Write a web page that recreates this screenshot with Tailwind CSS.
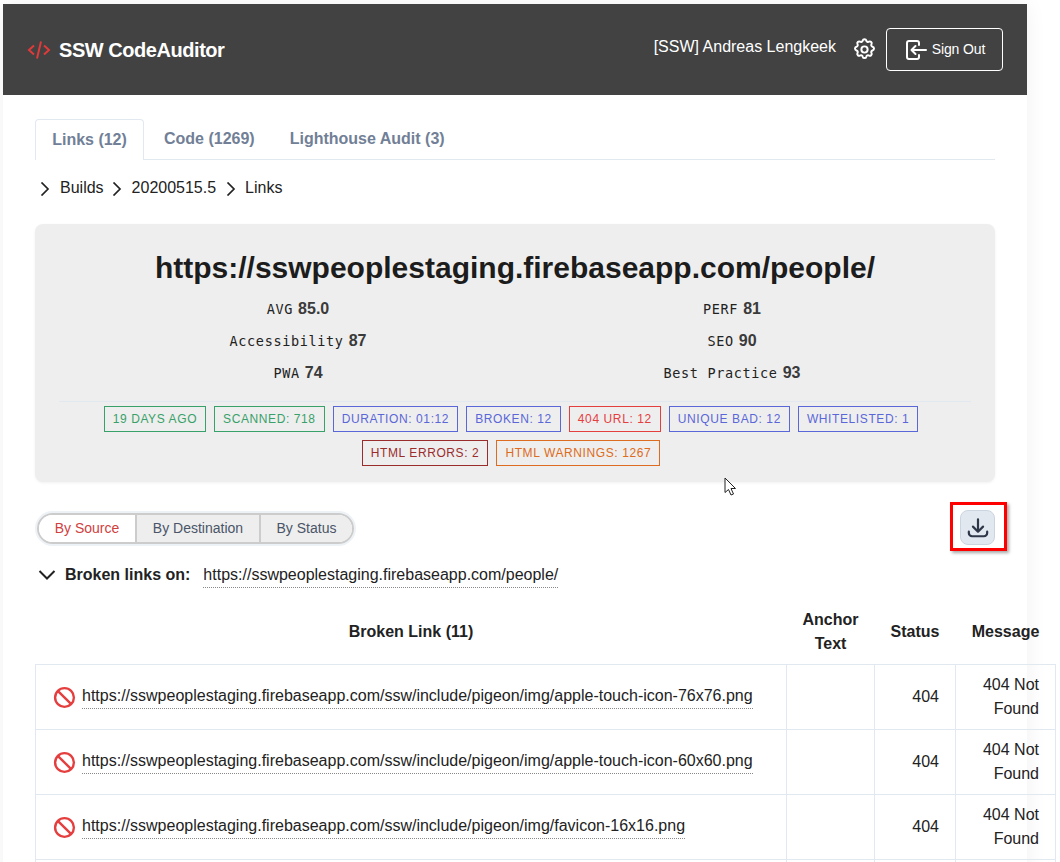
<!DOCTYPE html>
<html>
<head>
<meta charset="utf-8">
<script src="https://cdn.jsdelivr.net/npm/@tailwindcss/browser@4"></script>
</head>
<body class="bg-white">
<div class="relative w-[1060px] h-[862px] overflow-hidden font-['Liberation_Sans',Arial,sans-serif] text-[#222222] pt-1 pl-[3px]">
  <div class="w-[1024px] h-[900px] bg-white shadow-[0_0_20px_rgba(0,0,0,0.06)]">
    <header class="h-[91px] bg-[#424242] flex items-center justify-between pl-6 pr-6 text-white">
      <div class="flex items-center gap-[8px] mt-[1px]">
        <svg class="w-6 h-6" viewBox="0 0 24 24" fill="none" stroke="#e03a3a" stroke-width="2"><path d="M7 7.500 L2 12 L7 16.500M17 7.500 L22 12 L17 16.500M14 3.500 L10 20.500"/></svg>
        <span class="text-[20px] font-bold tracking-[-0.45px]">SSW CodeAuditor</span>
      </div>
      <div class="flex items-center">
        <span class="text-[16px] mr-[16px] -mt-[6px]">[SSW] Andreas Lengkeek</span>
        <svg class="w-[25px] h-[25px] mr-[9px]" viewBox="0 0 24 24" fill="none" stroke="white" stroke-width="1.900" stroke-linecap="round" stroke-linejoin="round"><path d="M10.300 3.400c.4-1.800 3-1.800 3.400 0a1.700 1.700 0 0 0 2.600 1.100c1.500-.9 3.300.8 2.400 2.400a1.700 1.700 0 0 0 1 2.500c1.900.5 1.900 3 0 3.500a1.700 1.700 0 0 0-1 2.500c.9 1.600-.9 3.300-2.400 2.400a1.700 1.700 0 0 0-2.600 1.100c-.4 1.800-3 1.800-3.400 0a1.700 1.700 0 0 0-2.600-1.100c-1.500.9-3.300-.8-2.400-2.400a1.700 1.700 0 0 0-1-2.500c-1.900-.5-1.900-3 0-3.500a1.700 1.700 0 0 0 1-2.500c-.9-1.600.9-3.300 2.400-2.400a1.700 1.700 0 0 0 2.600-1.100z"/><circle cx="12" cy="12" r="3"/></svg>
        <button class="w-[117px] h-[43px] border border-white rounded-[4px] flex items-center justify-center gap-[4px] text-[14px] tracking-[-0.1px] pb-[1px]">
          <svg class="w-[24px] h-[24px] mt-[1px]" viewBox="0 0 24 24" fill="none" stroke="white" stroke-width="2" stroke-linecap="round" stroke-linejoin="round"><path d="M15 7V5a2 2 0 0 0-2-2H5a2 2 0 0 0-2 2v14a2 2 0 0 0 2 2h8a2 2 0 0 0 2-2v-2"/><path d="M22 12H8M11.500 8L7.500 12l4 4"/></svg>
          <span>Sign Out</span>
        </button>
      </div>
    </header>
    <main class="px-8 pt-6">
      <nav class="h-[41px] border-b border-[#e2e8f0] flex text-[16px] font-bold text-[#718096]">
        <div class="w-[109px] h-[41px] bg-white border border-b-0 border-[#e2e8f0] rounded-t-[4px] flex items-center justify-center">Links (12)</div>
        <div class="ml-[20px] h-[39px] flex items-center">Code (1269)</div>
        <div class="ml-[35px] h-[39px] flex items-center">Lighthouse Audit (3)</div>
      </nav>
      <div class="h-[55px] flex items-center text-[16px] pl-[3px]">
        <svg class="w-[14px] h-[14px] mr-[8px] mt-[2px]" viewBox="0 0 14 14" fill="none" stroke="#222" stroke-width="1.700"><path d="M3.500 0.500 L10 7 L3.500 13.500"/></svg><span>Builds</span>
        <svg class="w-[14px] h-[14px] ml-[6px] mr-[8px] mt-[2px]" viewBox="0 0 14 14" fill="none" stroke="#222" stroke-width="1.700"><path d="M3.500 0.500 L10 7 L3.500 13.500"/></svg><span>20200515.5</span>
        <svg class="w-[14px] h-[14px] ml-[8px] mr-[7px] mt-[2px]" viewBox="0 0 14 14" fill="none" stroke="#222" stroke-width="1.700"><path d="M3.500 0.500 L10 7 L3.500 13.500"/></svg><span>Links</span>
      </div>
      <section class="mt-[9px] h-[258px] bg-[#eeeeee] rounded-[8px] shadow-[0_1px_3px_rgba(0,0,0,0.06)] px-6 pt-[26px]">
        <h1 class="text-[30px] leading-[36px] font-bold text-center text-[#1c1c1c]">https://sswpeoplestaging.firebaseapp.com/people/</h1>
        <div class="grid grid-cols-[434px_434px] pl-[22px] mt-[7px] text-center">
          <div class="h-[32px] flex items-center justify-center gap-[5px]"><span class="font-['DejaVu_Sans_Mono',monospace] text-[13.500px] tracking-[0.65px]">AVG</span><b class="text-[16px] text-[#3a3a3a]">85.0</b></div>
          <div class="h-[32px] flex items-center justify-center gap-[5px]"><span class="font-['DejaVu_Sans_Mono',monospace] text-[13.500px] tracking-[0.65px]">PERF</span><b class="text-[16px] text-[#3a3a3a]">81</b></div>
          <div class="h-[32px] flex items-center justify-center gap-[5px]"><span class="font-['DejaVu_Sans_Mono',monospace] text-[13.500px] tracking-[0.65px]">Accessibility</span><b class="text-[16px] text-[#3a3a3a]">87</b></div>
          <div class="h-[32px] flex items-center justify-center gap-[5px]"><span class="font-['DejaVu_Sans_Mono',monospace] text-[13.500px] tracking-[0.65px]">SEO</span><b class="text-[16px] text-[#3a3a3a]">90</b></div>
          <div class="h-[32px] flex items-center justify-center gap-[5px]"><span class="font-['DejaVu_Sans_Mono',monospace] text-[13.500px] tracking-[0.65px]">PWA</span><b class="text-[16px] text-[#3a3a3a]">74</b></div>
          <div class="h-[32px] flex items-center justify-center gap-[5px]"><span class="font-['DejaVu_Sans_Mono',monospace] text-[13.500px] tracking-[0.65px]">Best Practice</span><b class="text-[16px] text-[#3a3a3a]">93</b></div>
        </div>
        <div class="border-t border-[#e2e8f0] mt-[12px] pt-[4px] pr-[8px] flex flex-wrap justify-center gap-[8px] text-[12px] leading-[24px] tracking-[0.6px]">
          <span class="h-[26px] px-[8px] border border-[#38a169] text-[#38a169]">19 DAYS AGO</span>
          <span class="h-[26px] px-[8px] border border-[#38a169] text-[#38a169]">SCANNED: 718</span>
          <span class="h-[26px] px-[8px] border border-[#5a67d8] text-[#5a67d8]">DURATION: 01:12</span>
          <span class="h-[26px] px-[8px] border border-[#5a67d8] text-[#5a67d8]">BROKEN: 12</span>
          <span class="h-[26px] px-[8px] border border-[#e53e3e] text-[#e53e3e]">404 URL: 12</span>
          <span class="h-[26px] px-[8px] border border-[#5a67d8] text-[#5a67d8]">UNIQUE BAD: 12</span>
          <span class="h-[26px] px-[8px] border border-[#5a67d8] text-[#5a67d8]">WHITELISTED: 1</span>
          <span class="h-[26px] px-[8px] border border-[#9b2c2c] text-[#9b2c2c]">HTML ERRORS: 2</span>
          <span class="h-[26px] px-[8px] border border-[#dd6b20] text-[#dd6b20]">HTML WARNINGS: 1267</span>
        </div>
      </section>
      <div class="h-[62px] flex items-center justify-between mt-[18px] relative">
        <div class="ml-[2px] flex h-[31px] rounded-full border-2 border-[#cccccc] shadow-[0_0_0_2px_#edf2f7] text-[14px] text-[#4a5568] overflow-hidden -mt-[6px]">
          <div class="w-[98px] bg-white text-[#d14040] flex items-center justify-center border-r-2 border-[#cccccc]">By Source</div>
          <div class="w-[124px] bg-[#eeeeee] flex items-center justify-center border-r-2 border-[#cccccc]">By Destination</div>
          <div class="w-[91px] bg-[#eeeeee] flex items-center justify-center">By Status</div>
        </div>
        <button class="w-[35px] h-[35px] mb-[7px] rounded-[8px] bg-[#e2e8f0] border border-[#cbd5e0] flex items-center justify-center">
          <svg class="w-[22px] h-[22px]" viewBox="0 0 24 24" fill="none" stroke="#2d3748" stroke-width="2.400" stroke-linecap="round" stroke-linejoin="round"><path d="M12 2.500V15.500M6.500 10.500L12 16l5.500-5.500"/><path d="M2 16v1.500a3.500 3.500 0 0 0 3.500 3.500h13a3.500 3.500 0 0 0 3.500-3.500V16"/></svg>
        </button>
      </div>
      <div class="h-[28px] -mt-[1px] flex items-center text-[16px] pl-[2px]">
        <svg class="w-[20px] h-[20px] mr-[8px]" viewBox="0 0 20 20" fill="none" stroke="#222" stroke-width="2"><path d="M2.500 6 L10 13.500 L17.500 6"/></svg>
        <b class="mr-[13px]">Broken links on:</b>
        <span class="border-b border-dotted border-[#888888] leading-[25px]">https://sswpeoplestaging.firebaseapp.com/people/</span>
      </div>
      <table class="mt-[11px] w-[1020px] max-w-none table-fixed border-collapse text-[16px]">
        <colgroup><col class="w-[751px]"><col class="w-[88px]"><col class="w-[81px]"><col class="w-[100px]"></colgroup>
        <thead>
          <tr class="h-[64px] font-bold">
            <th class="text-center">Broken Link (11)</th>
            <th class="text-center leading-[24px]">Anchor Text</th>
            <th class="text-center">Status</th>
            <th class="text-center">Message</th>
          </tr>
        </thead>
        <tbody>
          <tr class="h-[65px]">
            <td class="border border-[#e2e8f0] pl-[17px]"><div class="flex items-center gap-[6px]"><svg class="w-[23px] h-[23px] mt-[2px]" viewBox="0 0 24 24" fill="none" stroke="#e53e3e" stroke-width="2.500"><circle cx="12" cy="12" r="9.800"/><path d="M5 5L19 19"/></svg><span class="border-b border-dotted border-[#888888] leading-[25px] mb-[2px]">https://sswpeoplestaging.firebaseapp.com/ssw/include/pigeon/img/apple-touch-icon-76x76.png</span></div></td>
            <td class="border border-[#e2e8f0]"></td>
            <td class="border border-[#e2e8f0] text-right pr-[16px]">404</td>
            <td class="border border-[#e2e8f0] text-right pr-[16px] leading-[24px]">404 Not Found</td>
          </tr>
          <tr class="h-[65px]">
            <td class="border border-[#e2e8f0] pl-[17px]"><div class="flex items-center gap-[6px]"><svg class="w-[23px] h-[23px] mt-[2px]" viewBox="0 0 24 24" fill="none" stroke="#e53e3e" stroke-width="2.500"><circle cx="12" cy="12" r="9.800"/><path d="M5 5L19 19"/></svg><span class="border-b border-dotted border-[#888888] leading-[25px] mb-[2px]">https://sswpeoplestaging.firebaseapp.com/ssw/include/pigeon/img/apple-touch-icon-60x60.png</span></div></td>
            <td class="border border-[#e2e8f0]"></td>
            <td class="border border-[#e2e8f0] text-right pr-[16px]">404</td>
            <td class="border border-[#e2e8f0] text-right pr-[16px] leading-[24px]">404 Not Found</td>
          </tr>
          <tr class="h-[65px]">
            <td class="border border-[#e2e8f0] pl-[17px]"><div class="flex items-center gap-[6px]"><svg class="w-[23px] h-[23px] mt-[2px]" viewBox="0 0 24 24" fill="none" stroke="#e53e3e" stroke-width="2.500"><circle cx="12" cy="12" r="9.800"/><path d="M5 5L19 19"/></svg><span class="border-b border-dotted border-[#888888] leading-[25px] mb-[2px]">https://sswpeoplestaging.firebaseapp.com/ssw/include/pigeon/img/favicon-16x16.png</span></div></td>
            <td class="border border-[#e2e8f0]"></td>
            <td class="border border-[#e2e8f0] text-right pr-[16px]">404</td>
            <td class="border border-[#e2e8f0] text-right pr-[16px] leading-[24px]">404 Not Found</td>
          </tr>
          <tr class="h-[65px]"><td class="border border-[#e2e8f0]"></td><td class="border border-[#e2e8f0]"></td><td class="border border-[#e2e8f0]"></td><td class="border border-[#e2e8f0]"></td></tr>
        </tbody>
      </table>
    </main>
  </div>
  <div class="absolute left-[950px] top-[502px] w-[57px] h-[49px] border-[3px] border-[#ff0000] shadow-[2px_2px_3px_rgba(0,0,0,0.35)]"></div>
  <svg class="absolute left-[724px] top-[477px] w-[13px] h-[20px]" viewBox="0 0 13 20"><path d="M1 1V15.500L4.500 12.500L7 18L9.500 17L7 11.500H11.500Z" fill="white" stroke="#222" stroke-width="1"/></svg>
</div>
</body>
</html>
